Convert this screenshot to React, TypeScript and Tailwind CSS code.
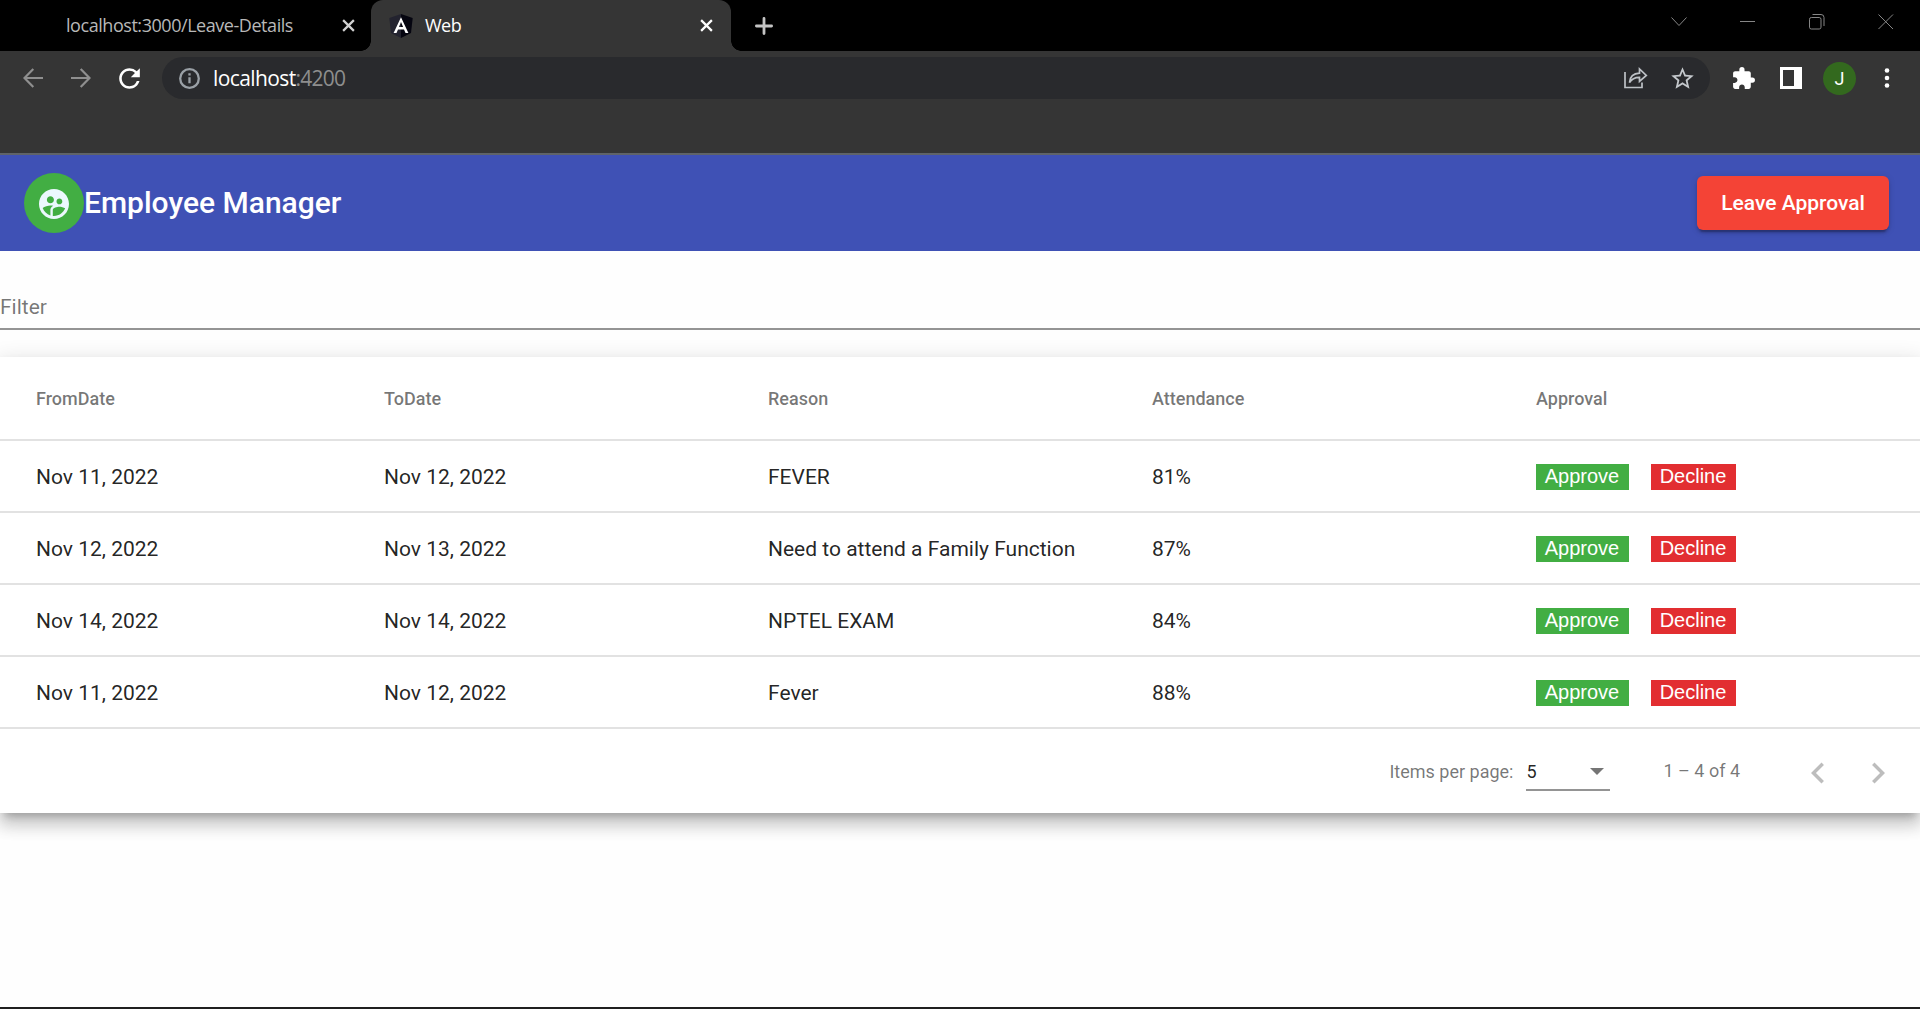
import React from 'react';
import { MdExtension, MdStarBorder, MdSupervisedUserCircle, MdChevronLeft, MdChevronRight, MdRefresh } from 'react-icons/md';

const rows = [
  { from: 'Nov 11, 2022', to: 'Nov 12, 2022', reason: 'FEVER', attendance: '81%' },
  { from: 'Nov 12, 2022', to: 'Nov 13, 2022', reason: 'Need to attend a Family Function', attendance: '87%' },
  { from: 'Nov 14, 2022', to: 'Nov 14, 2022', reason: 'NPTEL EXAM', attendance: '84%' },
  { from: 'Nov 11, 2022', to: 'Nov 12, 2022', reason: 'Fever', attendance: '88%' },
];

function CloseIcon({ className }: { className: string }) {
  return (
    <svg viewBox="0 0 14 14" className={className} fill="none" stroke="currentColor" strokeWidth="2.4">
      <path d="M1.2 1.2 12.8 12.8M12.8 1.2 1.2 12.8" />
    </svg>
  );
}

function TabStrip() {
  return (
    <div className="flex h-[51px] bg-black">
      <div className="flex w-[371px] items-center pl-[66px] text-[#b8b8b8]">
        <span className="w-[276px] pb-px text-[18px] leading-6 tracking-[-0.45px] whitespace-nowrap">localhost:3000/Leave-Details</span>
        <CloseIcon className="size-[13px] text-[#d0d0d0]" />
      </div>
      <div className="relative flex w-[360px] items-center rounded-t-[12px] bg-[#353535] pl-[18px] text-white">
        <div className="absolute bottom-0 -left-[10px] size-[10px] bg-[radial-gradient(circle_at_0_0,#000_9.5px,#353535_10px)]" />
        <div className="absolute -right-[10px] bottom-0 size-[10px] bg-[radial-gradient(circle_at_100%_0,#000_9.5px,#353535_10px)]" />
        <svg viewBox="0 0 24 24" className="size-6">
          <path d="M12 0 .3 4.1 2 19 12 24z" fill="#23232f" />
          <path d="M12 0 23.7 4.1 22 19 12 24z" fill="#050510" />
          <path d="M12 3.2 4.6 19h2.9l1.5-3.6h6l1.5 3.6h2.9zm0 4.9 2.1 4.9H9.900z" fill="#fff" />
        </svg>
        <span className="ml-3 w-[275px] pb-px text-[18px] leading-6 tracking-[-0.5px]">Web</span>
        <CloseIcon className="size-[13px]" />
      </div>
      <div className="flex flex-1 items-center pl-[23.5px]">
        <svg viewBox="0 0 18 18" className="size-[18px] text-[#c4c4c4]" stroke="currentColor" strokeWidth="2.8" strokeLinecap="round">
          <path d="M9 1.400V16.600M1.400 9H16.600" />
        </svg>
      </div>
      <div className="flex gap-[53px] pt-[14px] pr-[26px] text-[#868686]">
        <svg viewBox="0 0 16 16" className="size-4" fill="none" stroke="currentColor"><path d="M.5 3.500 8 11.500 15.500 3.500" /></svg>
        <svg viewBox="0 0 16 16" className="size-4" fill="none" stroke="currentColor"><path d="M0 7.500H15" /></svg>
        <svg viewBox="0 0 16 16" className="size-4" fill="none" stroke="currentColor">
          <rect x="0.500" y="3.500" width="11.500" height="11.500" rx="1.800" />
          <path d="M3.500 .5H12a3 3 0 0 1 3 3V12" />
        </svg>
        <svg viewBox="0 0 16 16" className="size-4" fill="none" stroke="currentColor"><path d="M.5 .5 15 15M15 .5 .5 15" /></svg>
      </div>
    </div>
  );
}

function Toolbar() {
  return (
    <div className="h-[102px] bg-[#353535] pt-[6px]">
      <div className="flex h-[42px] items-center pl-[23px]">
        <svg viewBox="0 0 20 20" className="size-5 text-[#8f8f8f]" fill="none" stroke="currentColor" strokeWidth="2.2"><path d="M20 10H1.600M10.300 1 1.500 10l8.800 9" /></svg>
        <svg viewBox="0 0 20 20" className="ml-[28px] size-5 text-[#8f8f8f]" fill="none" stroke="currentColor" strokeWidth="2.2"><path d="M0 10H18.400M9.700 1l8.800 9-8.800 9" /></svg>
        <MdRefresh className="ml-[23px] size-[31px] text-white" />
        <div className="ml-[17px] flex h-[42px] w-[1548px] items-center rounded-full bg-[#292a2d] pl-[15px]">
          <svg viewBox="0 0 25 25" className="size-[25px] text-[#9aa0a6]" fill="none" stroke="currentColor" strokeWidth="2.3">
            <circle cx="12.500" cy="12.500" r="9.300" />
            <path d="M12.500 11.200V17.300M12.500 7.300V9.600" />
          </svg>
          <div className="ml-[11px] flex-1 text-[21px] leading-7 tracking-[-0.6px] text-[#8e8e8e]">
            <span className="text-white">localhost</span><span className="tracking-[-0.8px]">:4200</span>
          </div>
          <svg viewBox="0 0 24 22" className="h-[22px] w-6 text-[#bdc1c6]" fill="none" stroke="currentColor" strokeWidth="1.7">
            <path d="M1 5V20.500H18V15.500" />
            <path d="M5.500 15.500C6 9.500 9.500 6.500 15.500 6.200V2L22.300 8.400 15.500 14.300V10.400C11 10.300 8 11.500 5.500 15.500z" />
          </svg>
          <MdStarBorder className="mr-[14px] ml-[21px] size-[27px] text-[#c4c8cc]" />
        </div>
        <MdExtension className="ml-[20.5px] size-[25px] text-white" />
        <svg viewBox="0 0 22 22" className="ml-[24.5px] size-[22px] text-white" fill="currentColor"><path fillRule="evenodd" d="M0 0H22V22H0zM3 3V19H14V3z" /></svg>
        <div className="ml-[21px] flex size-[33px] items-center justify-center rounded-full bg-[#33691e] pt-px font-['Roboto',sans-serif] text-[18px] text-white">J</div>
        <svg viewBox="0 0 6 20" className="ml-[28px] h-5 w-[6px]" fill="#fff"><circle cx="3" cy="2.500" r="2.300" /><circle cx="3" cy="10" r="2.300" /><circle cx="3" cy="17.500" r="2.300" /></svg>
      </div>
    </div>
  );
}

function AppHeader() {
  return (
    <header className="flex h-[98px] items-center justify-between border-t-2 border-[#5f6368] bg-[#3f51b5] pr-[31px] pl-6">
      <div className="flex items-center">
        <div className="flex size-[60px] items-center justify-center rounded-full bg-[#42ae43]">
          <MdSupervisedUserCircle className="mt-[2px] size-9 text-[#ebf8fd]" />
        </div>
        <h1 className="text-[30px] leading-[48px] font-medium text-white">Employee Manager</h1>
      </div>
      <button className="h-[54px] w-[192px] rounded-[6px] bg-[#f44336] pt-[2px] text-[21px] font-medium text-white shadow-[0_4.5px_1.5px_-3px_rgba(0,0,0,0.2),0_3px_3px_0_rgba(0,0,0,0.14),0_1.5px_7.5px_0_rgba(0,0,0,0.12)]">
        Leave Approval
      </button>
    </header>
  );
}

function LeaveTable() {
  return (
    <section className="relative bg-white shadow-[0_7.5px_7.5px_-4.5px_rgba(0,0,0,0.2),0_12px_15px_1.5px_rgba(0,0,0,0.14),0_4.5px_21px_3px_rgba(0,0,0,0.12)]">
      <div className="grid h-[84px] grid-cols-5 items-center border-b-2 border-[#e2e2e2] text-[18px] font-medium text-black/54">
        <div className="pl-9">FromDate</div>
        <div>ToDate</div>
        <div>Reason</div>
        <div>Attendance</div>
        <div>Approval</div>
      </div>
      {rows.map((row, i) => (
        <div key={i} className="grid h-[72px] grid-cols-5 items-center border-b-2 border-[#e2e2e2] pt-[3px] text-[21px] text-black/87">
          <div className="pl-9">{row.from}</div>
          <div>{row.to}</div>
          <div>{row.reason}</div>
          <div>{row.attendance}</div>
          <div className="flex gap-[22px] pb-px font-['Liberation_Sans',Arial,sans-serif] text-[20px] leading-[24px] text-white">
            <button className="h-[26px] w-[93px] bg-[#42ae43] pr-px pb-[2px]">Approve</button>
            <button className="h-[26px] w-[85px] bg-[#e22e31] pr-px pb-[2px]">Decline</button>
          </div>
        </div>
      ))}
      <div className="flex h-[84px] items-center justify-end pr-3 text-[18px] text-black/54">
        <span className="pt-px">Items per page:</span>
        <div className="ml-[13px] flex h-[40px] w-[84px] items-center justify-between border-b-2 border-[#949494] pt-[3px] pr-[6px] text-black/87">
          <span>5</span>
          <span className="border-x-[7.5px] border-t-[7.5px] border-x-transparent border-t-black/54" />
        </div>
        <span className="ml-[53px] pb-px">1 – 4 of 4</span>
        <div className="ml-[48px] flex text-[#bdbdbd]">
          <button className="flex size-[60px] items-center justify-center pt-1"><MdChevronLeft className="size-[42px]" /></button>
          <button className="flex size-[60px] items-center justify-center pt-1"><MdChevronRight className="size-[42px]" /></button>
        </div>
      </div>
    </section>
  );
}

export default function App() {
  return (
    <div className="flex h-[1009px] flex-col overflow-hidden border-b-2 border-[#1f1f1f] bg-[#fefefe]">
      <div className="font-['Open_Sans','Noto_Sans',sans-serif]">
        <TabStrip />
        <Toolbar />
      </div>
      <main className="flex-1 font-['Roboto',sans-serif]">
        <AppHeader />
        <div className="mb-[27px] h-[79px] border-b-2 border-[#949494] pt-[42px] text-[21px] leading-7 text-black/54">Filter</div>
        <LeaveTable />
      </main>
    </div>
  );
}
